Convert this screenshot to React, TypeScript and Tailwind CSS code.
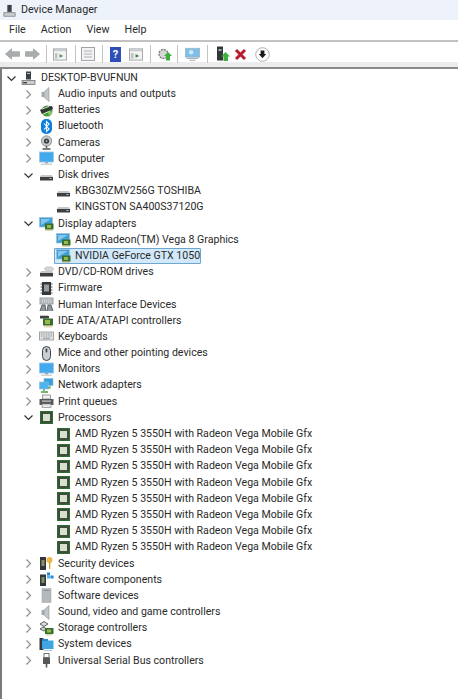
import React from "react";

const Chevron = ({ open }: { open?: boolean }) => (
  <svg width="9" height="9" viewBox="0 0 9 9" className="shrink-0">
    {open ? (
      <path d="M0.5 2.5 L4.5 6.5 L8.5 2.5" fill="none" stroke="#333" strokeWidth="1.2" />
    ) : (
      <path d="M2.5 0.5 L6.5 4.5 L2.5 8.5" fill="none" stroke="#8f8f8f" strokeWidth="1.2" />
    )}
  </svg>
);

const S = ({ children }: { children: React.ReactNode }) => (
  <svg width="15" height="15" viewBox="0 0 15 15" className="shrink-0">{children}</svg>
);

const Pc = () => (
  <S>
    <rect x="5" y="0.5" width="5" height="8" fill="#3a4048" />
    <rect x="6" y="2" width="3" height="1" fill="#b8c0c8" />
    <rect x="1" y="9.5" width="13" height="4" fill="#c9ccd0" stroke="#666" strokeWidth="0.7" />
    <rect x="2" y="11" width="4" height="1.4" fill="#444" />
  </S>
);
const Speaker = () => (
  <S>
    <rect x="2.5" y="5" width="3" height="5" fill="#a8acaf" />
    <path d="M5 5 L10 0.5 V14.5 L5 10 Z" fill="#c2c6c8" stroke="#8c9194" strokeWidth="0.6" />
  </S>
);
const Battery = () => (
  <S>
    <ellipse cx="8" cy="8" rx="5.5" ry="5.5" fill="#4a9a3f" />
    <path d="M1 7 L6 4 L13 3 L14 6 L8 9 L3 11 Z" fill="#2f3a30" />
    <path d="M3 6 L10 3.5 M4 11 L11 8" stroke="#d8e8c8" strokeWidth="1" />
    <circle cx="11" cy="10" r="2" fill="#8ac66a" />
  </S>
);
const Bluetooth = () => (
  <S>
    <rect x="2" y="0" width="11" height="15" rx="5" fill="#0b7fe0" />
    <path d="M5 4.5 L10 10 L7.5 12.5 V2.5 L10 5 L5 10.5" fill="none" stroke="#fff" strokeWidth="1.1" />
  </S>
);
const Camera = () => (
  <S>
    <circle cx="7.5" cy="6" r="5.2" fill="#c5c7c9" stroke="#777" strokeWidth="0.7" />
    <circle cx="7.5" cy="6" r="2.6" fill="#3c3f42" />
    <circle cx="7.5" cy="6" r="1" fill="#9aa" />
    <path d="M7.5 11 V13 M3.5 14 H11.5" stroke="#555" strokeWidth="1.4" />
  </S>
);
const Monitor = () => (
  <S>
    <rect x="0.5" y="1" width="14" height="10" fill="#42a9ee" stroke="#9cc6e4" strokeWidth="0.8" />
    <rect x="6" y="11" width="3" height="1.5" fill="#9aa3aa" />
    <rect x="2" y="12.5" width="11" height="1.5" fill="#cfd3d6" />
  </S>
);
const Disk = () => (
  <S>
    <path d="M2 7 H13 L14 9 H1 Z" fill="#c5c7c9" />
    <rect x="1" y="9" width="13" height="3.5" fill="#3d4042" />
    <rect x="10.5" y="10" width="2" height="1" fill="#b8bcc0" />
  </S>
);
const Display = () => (
  <S>
    <rect x="0.5" y="1.5" width="13" height="9.5" fill="#3d9ed8" stroke="#9cc2d8" strokeWidth="0.8" />
    <path d="M2 3 H12 L2 9 Z" fill="#86c6ec" />
    <rect x="6" y="7.5" width="8.5" height="6" fill="#38702f" />
    <rect x="8" y="9" width="4" height="3" fill="#9ab84e" />
    <path d="M7 13.5 V15 M9 13.5 V15 M11 13.5 V15 M13 13.5 V15" stroke="#b59b3c" strokeWidth="0.8" />
  </S>
);
const Dvd = () => (
  <S>
    <ellipse cx="10" cy="4" rx="4.5" ry="2.2" fill="#d4d6d8" stroke="#aaa" strokeWidth="0.5" />
    <path d="M2 6 H13 L14 8 H1 Z" fill="#c5c7c9" />
    <rect x="1" y="8" width="13" height="3.5" fill="#3d4042" />
  </S>
);
const Firmware = () => (
  <S>
    <rect x="3" y="1" width="9" height="13" fill="#35383a" />
    <rect x="5" y="3.5" width="5" height="7" fill="#9a9d9f" />
    <path d="M1.5 3 H3 M1.5 6 H3 M1.5 9 H3 M1.5 12 H3 M12 3 H13.5 M12 6 H13.5 M12 9 H13.5 M12 12 H13.5" stroke="#555" strokeWidth="1" />
  </S>
);
const Hid = () => (
  <S>
    <rect x="1" y="1" width="13" height="6" fill="#d0d4d8" stroke="#777" strokeWidth="0.7" />
    <path d="M2 3 H13 M2 5 H13" stroke="#7b8086" strokeWidth="0.7" strokeDasharray="1.2 0.8" />
    <path d="M1 14 L3 8 H6 L7 14 M8 14 L9 8 H12 L14 14" fill="#8e959b" stroke="#4b5056" strokeWidth="0.8" />
  </S>
);
const Ide = () => (
  <S>
    <rect x="1" y="3" width="9" height="2.5" fill="#3f4244" />
    <rect x="1" y="2" width="8" height="1" fill="#c5c7c9" />
    <rect x="4" y="5.5" width="10" height="7" fill="#38702f" />
    <rect x="6" y="7" width="5" height="4" fill="#9ab84e" />
    <path d="M6 12.5 V14.5 M8 12.5 V14.5 M10 12.5 V14.5 M12 12.5 V14.5" stroke="#b59b3c" strokeWidth="0.8" />
  </S>
);
const Keyboard = () => (
  <S>
    <rect x="0.5" y="3" width="14" height="8" fill="#dfe2e4" stroke="#8e9396" strokeWidth="0.8" />
    <path d="M2 5 H13 M2 7 H13" stroke="#85898c" strokeWidth="0.9" strokeDasharray="1 0.7" />
    <path d="M4 9.2 H11" stroke="#85898c" strokeWidth="0.9" />
  </S>
);
const Mouse = () => (
  <S>
    <rect x="3.5" y="0.5" width="8" height="14" rx="4" fill="#c9ced2" stroke="#3f4448" strokeWidth="1" />
    <rect x="6.7" y="2.5" width="1.6" height="4" rx="0.8" fill="#3f4448" />
  </S>
);
const Network = () => (
  <S>
    <rect x="5" y="0.5" width="9" height="7" fill="#38a0e0" stroke="#8fbbd4" strokeWidth="0.6" />
    <rect x="0.5" y="4" width="9" height="7" fill="#4cb5ee" stroke="#8fbbd4" strokeWidth="0.6" />
    <path d="M5 11 V13 M2 14 H9" stroke="#4b9a3f" strokeWidth="1.3" />
    <path d="M11 8 V10 H9" stroke="#4b9a3f" strokeWidth="1.1" fill="none" />
  </S>
);
const Printer = () => (
  <S>
    <rect x="3.5" y="1" width="8" height="4" fill="#f0f0f0" stroke="#777" strokeWidth="0.7" />
    <rect x="0.5" y="5" width="14" height="6" fill="#55595c" />
    <rect x="3" y="6.5" width="9" height="1.2" fill="#c8ccce" />
    <rect x="3" y="10" width="9" height="3.5" fill="#e8e8e8" stroke="#777" strokeWidth="0.6" />
  </S>
);
const Cpu = ({ size = 13 }: { size?: number }) => (
  <svg width={size} height={size} viewBox="0 0 13 13" className="shrink-0">
    <rect x="0" y="0" width="13" height="13" fill="#2f6a32" />
    <rect x="1" y="1" width="11" height="11" fill="#3d4f3a" />
    <rect x="3" y="3" width="7" height="7" fill="#d9e0cf" />
  </svg>
);
const Security = () => (
  <S>
    <rect x="1" y="1" width="6" height="13" fill="#33363a" />
    <rect x="2.5" y="4" width="3" height="6" fill="#8a8f64" />
    <circle cx="10.5" cy="4" r="3" fill="#e9b84a" />
    <rect x="10" y="6" width="1.4" height="7" fill="#d9a63a" />
  </S>
);
const SoftwareC = () => (
  <S>
    <rect x="1" y="2.5" width="6" height="11.5" fill="#33363a" />
    <rect x="2.5" y="5" width="3" height="6" fill="#7a8f64" />
    <rect x="8" y="0.5" width="3" height="3" fill="#1e88d8" />
    <rect x="11.5" y="3.5" width="3" height="3" fill="#1e88d8" />
    <rect x="8" y="3.5" width="3" height="3" fill="#5cb0ec" />
  </S>
);
const SoftwareD = () => (
  <S>
    <rect x="3" y="0.5" width="9" height="14" fill="#b4b9bd" stroke="#9a9fa3" strokeWidth="0.5" />
    <rect x="4.5" y="2" width="6" height="1" fill="#8a8f93" />
  </S>
);
const Storage = () => (
  <S>
    <path d="M1 3 L5 0.5 L9 3 L5 5.5 Z" fill="#d8dadc" stroke="#3c3f42" strokeWidth="0.8" />
    <path d="M1 8 L4 6 L8 8 L5 10 Z" fill="#cfd2d4" stroke="#3c3f42" strokeWidth="0.8" />
    <rect x="6" y="7" width="8.5" height="6" fill="#38702f" />
    <rect x="8" y="8.5" width="4" height="3" fill="#9ab84e" />
    <path d="M8 13 V14.5 M10 13 V14.5 M12 13 V14.5" stroke="#b59b3c" strokeWidth="0.8" />
  </S>
);
const System = () => (
  <S>
    <rect x="0.5" y="1" width="4" height="12" fill="#33363a" />
    <rect x="3" y="3.5" width="11.5" height="8.5" fill="#3fa6e6" />
    <rect x="3" y="2" width="6" height="2" fill="#2f86c4" />
    <path d="M5 13.5 H13" stroke="#a6cde8" strokeWidth="1" />
  </S>
);
const Usb = () => (
  <S>
    <rect x="5" y="0.5" width="5" height="4" fill="#fff" stroke="#555" strokeWidth="0.8" />
    <rect x="4" y="4.5" width="7" height="6.5" fill="#55595c" />
    <path d="M7.5 11 V14.5" stroke="#55595c" strokeWidth="1.6" />
  </S>
);

type Row = { label: string; icon: React.ReactNode; open?: boolean; child?: boolean; selected?: boolean };
const ryzen = "AMD Ryzen 5 3550H with Radeon Vega Mobile Gfx";
const rows: Row[] = [
  { label: "Audio inputs and outputs", icon: <Speaker /> },
  { label: "Batteries", icon: <Battery /> },
  { label: "Bluetooth", icon: <Bluetooth /> },
  { label: "Cameras", icon: <Camera /> },
  { label: "Computer", icon: <Monitor /> },
  { label: "Disk drives", icon: <Disk />, open: true },
  { label: "KBG30ZMV256G TOSHIBA", icon: <Disk />, child: true },
  { label: "KINGSTON SA400S37120G", icon: <Disk />, child: true },
  { label: "Display adapters", icon: <Display />, open: true },
  { label: "AMD Radeon(TM) Vega 8 Graphics", icon: <Display />, child: true },
  { label: "NVIDIA GeForce GTX 1050", icon: <Display />, child: true, selected: true },
  { label: "DVD/CD-ROM drives", icon: <Dvd /> },
  { label: "Firmware", icon: <Firmware /> },
  { label: "Human Interface Devices", icon: <Hid /> },
  { label: "IDE ATA/ATAPI controllers", icon: <Ide /> },
  { label: "Keyboards", icon: <Keyboard /> },
  { label: "Mice and other pointing devices", icon: <Mouse /> },
  { label: "Monitors", icon: <Monitor /> },
  { label: "Network adapters", icon: <Network /> },
  { label: "Print queues", icon: <Printer /> },
  { label: "Processors", icon: <Cpu />, open: true },
  ...Array.from({ length: 8 }, () => ({ label: ryzen, icon: <Cpu />, child: true })),
  { label: "Security devices", icon: <Security /> },
  { label: "Software components", icon: <SoftwareC /> },
  { label: "Software devices", icon: <SoftwareD /> },
  { label: "Sound, video and game controllers", icon: <Speaker /> },
  { label: "Storage controllers", icon: <Storage /> },
  { label: "System devices", icon: <System /> },
  { label: "Universal Serial Bus controllers", icon: <Usb /> },
];

const Sep = () => <div className="w-px h-[18px] bg-[#c4c4c4] shrink-0" />;

const BackIcon = ({ flip }: { flip?: boolean }) => (
  <svg width="15" height="12" viewBox="0 0 16 12" className={flip ? "-scale-x-100" : ""}>
    <path d="M0.5 6 L7 0.5 V3.5 H15.5 V8.5 H7 V11.5 Z" fill="#a9adaf" stroke="#8a8e90" strokeWidth="0.6" />
  </svg>
);
const Win = ({ color = "#5a8f5a", bar = "#c8ccd0" }: { color?: string; bar?: string }) => (
  <svg width="14" height="13" viewBox="0 0 15 13">
    <rect x="0.5" y="0.5" width="14" height="12" fill="#f3f3f3" stroke="#a0a4a8" />
    <rect x="1" y="1" width="13" height="2" fill={bar} />
    <rect x="2" y="5" width="3" height="6" fill="#c0c4c8" />
    <path d="M7 6 L11 8 L7 10 Z" fill={color} />
  </svg>
);

export default function App() {
  return (
    <div className="w-[458px] h-[699px] bg-white overflow-hidden flex flex-col font-['Roboto','Open_Sans',sans-serif] text-[#2a2a2a]">
      <div className="h-5 bg-[#eef2fa] flex items-center pl-[3px] pt-[1px] gap-[5px] shrink-0">
        <svg width="13" height="14" viewBox="0 0 15 15">
          <rect x="5" y="0.5" width="5" height="8" fill="#3a4048" />
          <rect x="1" y="9.5" width="13" height="4" fill="#c9ccd0" stroke="#666" strokeWidth="0.7" />
        </svg>
        <span className="text-[10.7px] leading-none">Device Manager</span>
      </div>
      <div className="h-[20px] flex items-center pl-[9px] pt-[1px] gap-[15px] text-[10.7px] shrink-0">
        <span>File</span>
        <span>Action</span>
        <span>View</span>
        <span>Help</span>
      </div>
      <div className="h-[29px] shrink-0 border-t-2 border-[#c2c2c2] border-b-2 border-b-[#8a8a8a] flex items-center pl-[5px] pb-[1px] bg-[linear-gradient(to_bottom,#ffffff_80%,#ececec_80%)]">
        <BackIcon />
        <span className="w-[5px]" />
        <BackIcon flip />
        <span className="w-[6px]" />
        <Sep />
        <span className="w-[6px]" />
        <Win />
        <span className="w-[8px]" />
        <Sep />
        <span className="w-[5px]" />
        <svg width="14" height="14" viewBox="0 0 14 14">
          <rect x="0.5" y="0.5" width="13" height="13" fill="#f2f2f2" stroke="#a0a4a8" />
          <path d="M3 4 H11 M3 7 H11 M3 10 H11" stroke="#b0b4b8" />
        </svg>
        <span className="w-[7px]" />
        <Sep />
        <span className="w-[7px]" />
        <span className="w-[11px] h-[15px] bg-[#2e4fb8] text-white text-[11px] font-bold leading-[15px] text-center">?</span>
        <span className="w-[8px]" />
        <Win color="#3f7f3f" />
        <span className="w-[7px]" />
        <Sep />
        <span className="w-[6px]" />
        <svg width="16" height="16" viewBox="0 0 16 16">
          <circle cx="6.5" cy="8" r="4.5" fill="#d8d8d8" stroke="#7c7c7c" strokeWidth="1.4" strokeDasharray="2 1" />
          <path d="M11 6 L15 10 H13 V14.5 H9 V10 H7 Z" fill="#3fae3f" />
        </svg>
        <span className="w-[4px]" />
        <Sep />
        <span className="w-[7px]" />
        <svg width="15" height="15" viewBox="0 0 17 15">
          <rect x="0.5" y="0.5" width="16" height="10" fill="#7cc0ea" stroke="#9db8c8" />
          <path d="M2 12 L15 12 M5 14 H12" stroke="#9aa4aa" />
          <circle cx="7" cy="5" r="2.5" fill="#d0e8f8" />
        </svg>
        <span className="w-[7px]" />
        <Sep />
        <span className="w-[8px]" />
        <svg width="14" height="16" viewBox="0 0 14 16">
          <rect x="1" y="0.5" width="6" height="14" fill="#33363a" />
          <rect x="2.5" y="3" width="3" height="2" fill="#9aa" />
          <path d="M9.5 6 L14 10.5 H12 V15 H7.5 V10.5 H5 Z" fill="#3fae3f" />
        </svg>
        <span className="w-[4px]" />
        <svg width="13" height="13" viewBox="0 0 13 13">
          <path d="M2 2 L11 11 M11 2 L2 11" stroke="#b81c2e" strokeWidth="3" />
        </svg>
        <span className="w-[8px]" />
        <svg width="15" height="15" viewBox="0 0 15 15">
          <circle cx="7.5" cy="7.5" r="6.8" fill="#fff" stroke="#a8a8a8" strokeWidth="0.9" />
          <path d="M5.6 3.5 H9.4 V7 H11.2 L7.5 11.2 L3.8 7 H5.6 Z" fill="#1a1a1a" />
        </svg>
      </div>
      <div className="flex-1 border-l-2 border-[#7a7a7a] flex flex-col">
        <div className="h-[17px] pt-[1px] flex items-center pl-[5px] shrink-0">
          <Chevron open />
          <span className="w-[5px]" />
          <Pc />
          <span className="w-[5px]" />
          <span className="text-[10.6px]">DESKTOP-BVUFNUN</span>
        </div>
        {rows.map((r, i) => (
          <div key={i} className="h-[16.2px] flex items-center shrink-0 whitespace-nowrap">
            {r.child ? (
              <div className="pl-[53px] flex items-center">
                <div
                  className={
                    r.selected
                      ? "h-[16px] flex items-center bg-[#d2e9fb] border border-[#6ea6d2] rounded-[1px] -ml-px"
                      : "h-[16px] flex items-center border border-transparent -ml-px"
                  }
                >
                  <span className="w-[17px] flex items-center justify-center">{r.icon}</span>
                  <span className="ml-[3px] text-[10.6px] leading-[14px]">{r.label}</span>
                </div>
              </div>
            ) : (
              <div className="pl-[22px] flex items-center">
                <span className="w-[9px] flex justify-center"><Chevron open={r.open} /></span>
                <span className="ml-[5px] w-[17px] flex items-center justify-center">{r.icon}</span>
                <span className="ml-[3px] text-[10.6px] leading-[16px]">{r.label}</span>
              </div>
            )}
          </div>
        ))}
      </div>
    </div>
  );
}
